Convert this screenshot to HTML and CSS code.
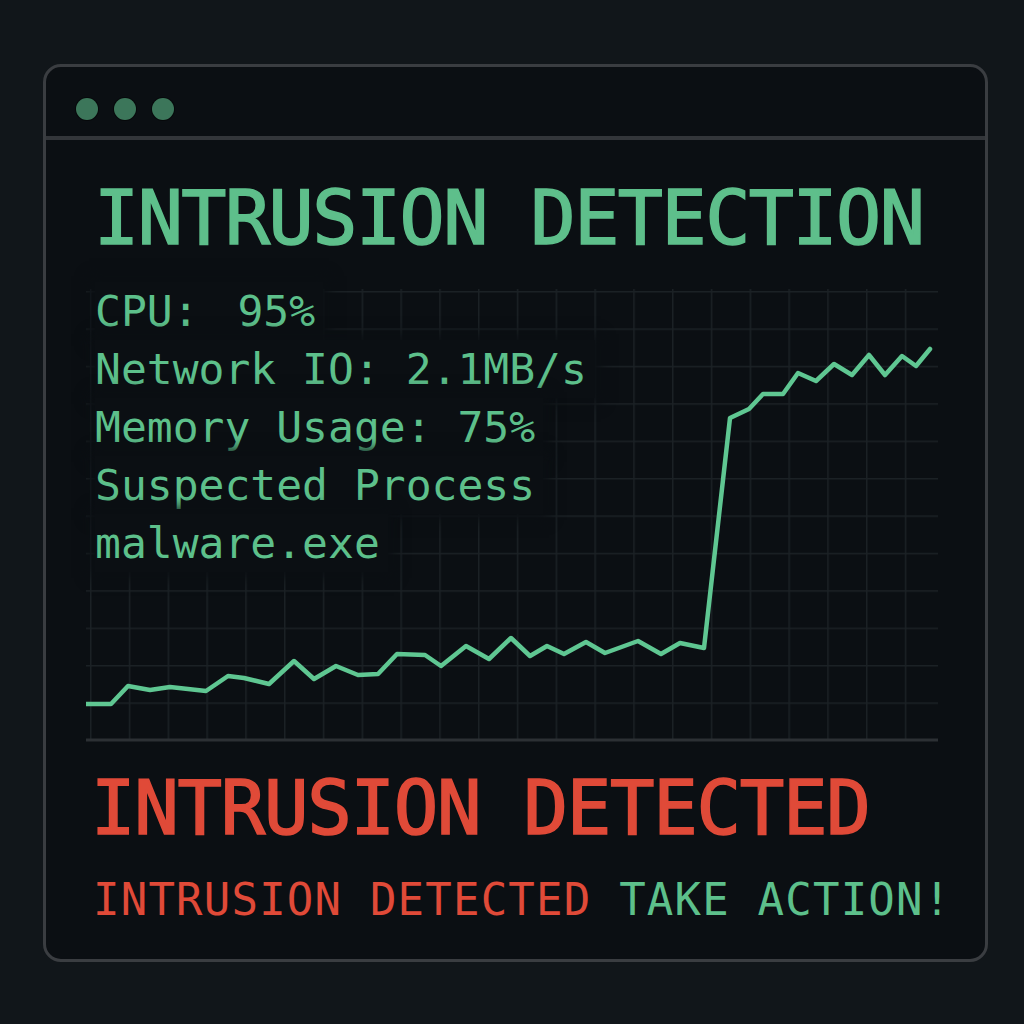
FILE: index.html
```html
<!DOCTYPE html>
<html lang="en">
<head>
  <meta charset="UTF-8">
  <meta name="viewport" content="width=device-width, initial-scale=1.0">
  <title>Intrusion Detection</title>
  <link rel="stylesheet" href="styles.css">
</head>
<body>
  <div class="window">
    <!-- barra superior con los tres puntos -->
    <div class="titlebar">
      <span class="dot"></span>
      <span class="dot"></span>
      <span class="dot"></span>
    </div>

    <div class="content">
      <h1 class="title">INTRUSION DETECTION</h1>

      <div class="chart">
        <svg class="graph" viewBox="88 290 852 453" width="852" height="453">
          <defs>
            <pattern id="grid" x="92" y="292" width="38.8" height="37.4" patternUnits="userSpaceOnUse">
              <path d="M 0 0 L 38.8 0 M 0 0 L 0 37.4" fill="none" stroke="#1b2125" stroke-width="3"/>
            </pattern>
          </defs>
          <rect x="88" y="290" width="852" height="450" fill="url(#grid)"/>
          <line class="axis" x1="88" y1="741" x2="940" y2="741"/>
          <polyline class="line" points="88,705 113,705 130,687 152,691 172,688 208,692 230,677 246,679 271,685 296,662 316,680 338,667 360,676 380,675 399,655 427,656 443,667 468,647 491,660 513,639 532,657 549,647 566,655 588,643 607,654 640,642 663,655 682,644 706,649 732,419 751,410 765,395 785,395 800,374 818,382 836,365 854,376 871,356 887,376 904,357 918,367 932,350"/>
        </svg>

        <div class="stats">
          <span class="stat cpu">CPU: 95%</span>
          <span class="stat">Network IO: 2.1MB/s</span>
          <span class="stat">Memory Usage: 75%</span>
          <span class="stat">Suspected Process</span>
          <span class="stat">malware.exe</span>
        </div>
      </div>

      <h2 class="alert">INTRUSION DETECTED</h2>
      <p class="ticker"><span class="red">INTRUSION DETECTED</span> TAKE ACTION!</p>
    </div>
  </div>
</body>
</html>
```

FILE: styles.css
```css
body {
  margin: 0;
  padding: 64px 36px 0 43px;
  background-color: #11161a;
  font-family: "DejaVu Sans Mono", "Liberation Mono", monospace;
  color: #5dc08b;
}

.window {
  width: 945px;
  height: 898px;
  box-sizing: border-box;
  border: 3px solid #3a3d41;
  border-radius: 18px;
  background-color: #0b0f13;
  display: flex;
  flex-direction: column;
  overflow: hidden;
}

.titlebar {
  height: 73px;
  padding: 31px 0 0 30px;
  box-sizing: border-box;
  border-bottom: 4px solid #33363a;
  display: flex;
  align-items: flex-start;
  gap: 16px;
}

.dot {
  width: 22px;
  height: 22px;
  border-radius: 50%;
  background-color: #3c765a;
  box-shadow: 0 0 0 1px #07090b;
}

.content {
  padding: 41px 45px 0 42px;
}

.title {
  margin: 0 0 0 6px;
  font-size: 75px;
  line-height: 75px;
  font-weight: normal;
  -webkit-text-stroke: 1.6px #5ebf8b;
  letter-spacing: -1.5px;
  color: #5ebf8b;
}

.chart {
  position: relative;
  margin: 33px 0 0 -2px;
  width: 852px;
  height: 453px;
}

.graph {
  display: block;
}

.axis {
  stroke: #2c3034;
  stroke-width: 3;
}

.line {
  fill: none;
  stroke: #5fc792;
  stroke-width: 4.5;
  stroke-linejoin: round;
  stroke-linecap: round;
}

/* textos encima del grafico */
.stats {
  position: absolute;
  top: -7px;
  left: 9px;
  display: flex;
  flex-direction: column;
  align-items: flex-start;
}

.stat {
  font-size: 43px;
  line-height: 58px;
  padding-right: 8px;
  background-color: #0b0f13;
  box-shadow: 0 0 12px 6px #0b0f13;
  white-space: pre;
}

.cpu {
  word-spacing: 13px;
}

.alert {
  margin: 29px 0 0 3px;
  font-size: 74px;
  line-height: 74px;
  font-weight: normal;
  -webkit-text-stroke: 1.6px #e04a38;
  letter-spacing: -1.3px;
  color: #e04a38;
}

.ticker {
  margin: 33px 0 0 5px;
  font-size: 44px;
  line-height: 44px;
  letter-spacing: 1.2px;
  white-space: nowrap;
  color: #5dc08b;
}

.red {
  color: #e04a38;
}
```
